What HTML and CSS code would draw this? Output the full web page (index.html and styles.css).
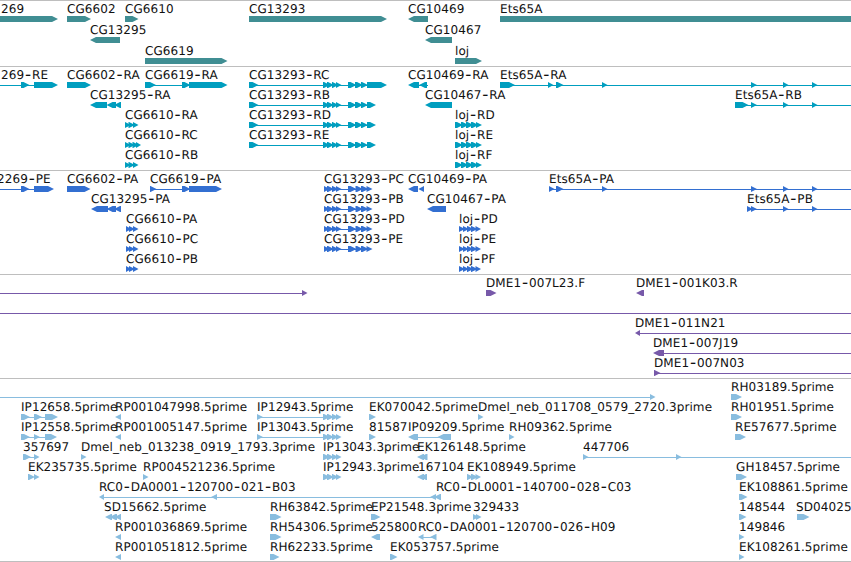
FILE: index.html
```html
<!DOCTYPE html>
<html lang="en">
<head>
    <meta charset="UTF-8">
    <title>Genome Browser</title>
    <link rel="stylesheet" href="styles.css">
</head>
<body>
    <main class="browser">
        <section class="track track-gene" id="gene"></section>
        <section class="track track-mrna" id="mrna"></section>
        <section class="track track-cds" id="cds"></section>
        <section class="track track-bac" id="bac"></section>
        <section class="track track-est" id="est"></section>
    </main>
    <script src="tracks.js"></script>
</body>
</html>
```
FILE: styles.css
```css
body {
    margin: 0;
    background-color: #fff;
    overflow: hidden;
}

.browser {
    display: flex;
    flex-direction: column;
    width: 851px;
    border-bottom: 1px solid #bebebe;
}

.track {
    box-sizing: border-box;
    border-top: 1px solid #bebebe;
    height: 104px;
    overflow: hidden;
}

.track svg {
    display: block;
    width: 100%;
    height: 100%;
}

.track text {
    font-family: "DejaVu Sans", sans-serif;
    font-size: 12px;
    letter-spacing: 0.08px;
    fill: #111;
    white-space: pre;
    text-rendering: geometricPrecision;
}

.track .hyphen {
    font-size: 17px;
}

.track-gene {
    height: 66px;
    color: #408e93;
}

.track-mrna {
    color: #009ebf;
}

.track-cds {
    color: #336fd1;
}

.track-bac {
    color: #7759a9;
}

.track-est {
    height: 183px;
    color: #89bddf;
}

.intron {
    fill: currentColor;
    shape-rendering: crispEdges;
}

.exon {
    fill: currentColor;
}
```
FILE: tracks.js
```js
const SVG_NS = 'http://www.w3.org/2000/svg';
const BAR = 6;
const TIP = 6;
const END = 870;
const HYPHEN_PAD = 0.8;
const HYPHEN_DROP = 1.2;

// exon groups used by more than one feature
const quad = [[323, 330], [327, 334], [332, 338.5], [336, 341.5]];
const rcExons = [[249, 258.5], ...quad, [348, 356.5], [355, 363], [361, 368]];
const rbExons = [...rcExons, [367, 376]];
const pcExons = [[324, 330], ...quad.slice(1), [348, 356.5], [355.5, 363], [361, 368.5], [366.5, 372.5]];
const etsExons = [[751, 757], [783, 788.5], [812, 817.5]];
const lojR = [[455, 463], [461, 468.5], [466, 473.5], [471, 478.5], [476, 482]];
const lojP = [[459, 465], [463, 469], [467, 473.5], [471, 477.5], [475.5, 481]];
const tripleR = [[125, 131], [128.5, 135], [133, 138.5]];
const tripleP = [[126, 131.5], [129, 135], [133, 138.5]];
const ip5 = [[257, 263], ...quad];

// row, label, label x, strand, exons, line
const tracks = {
    gene: { pitch: 21, features: [
        [0, '269', 1, 1, [[-10, 58]]],
        [0, 'CG6602', 67, 1, [[67, 91]]],
        [0, 'CG6610', 125, 1, [[125, 138.5]]],
        [0, 'CG13293', 249, 1, [[249, 387]]],
        [0, 'CG10469', 408, -1, [[408, 428]]],
        [0, 'Ets65A', 500, 1, [[500, END]]],
        [1, 'CG13295', 90, -1, [[90, 120]]],
        [1, 'CG10467', 425, -1, [[425, 452]]],
        [2, 'CG6619', 145, 1, [[145, 227.5]]],
        [2, 'loj', 455, 1, [[455, 482]]]
    ] },
    mrna: { pitch: 20, features: [
        [0, '269-RE', 1, 1, [[21, 29.5], [34, 58]], [0, 50]],
        [0, 'CG6602-RA', 67, 1, [[67, 91]]],
        [0, 'CG6619-RA', 145, 1, [[145, 156], [182, 190.5], [189, 227.5]], [145, 200]],
        [0, 'CG13293-RC', 249, 1, [...rcExons, [367, 387]], [249, 370]],
        [0, 'CG10469-RA', 408, -1, [[408, 419], [419, 427]], [410, 428]],
        [0, 'Ets65A-RA', 500, 1, [[500, 515], [548, 553.5], [556, 563.5], [602, 607.5], ...etsExons], [500, END]],
        [1, 'CG13295-RA', 90, -1, [[90, 107], [106.5, 116], [114, 121]]],
        [1, 'CG13293-RB', 249, 1, rbExons, [249, 370]],
        [1, 'CG10467-RA', 425, -1, [[425, 452]]],
        [1, 'Ets65A-RB', 735, 1, [[735, 748.5], ...etsExons], [735, END]],
        [2, 'CG6610-RA', 125, 1, tripleR],
        [2, 'CG13293-RD', 249, 1, rbExons, [249, 370]],
        [2, 'loj-RD', 455, 1, lojR],
        [3, 'CG6610-RC', 125, 1, [[125, 131], [128.5, 135], [132.5, 139], [136, 141]]],
        [3, 'CG13293-RE', 249, 1, rbExons, [249, 370]],
        [3, 'loj-RE', 455, 1, lojR],
        [4, 'CG6610-RB', 125, 1, tripleR],
        [4, 'loj-RF', 455, 1, lojR]
    ] },
    cds: { pitch: 20, features: [
        [0, '2269-PE', -3, 1, [[21, 29.5], [34, 54]], [0, 45]],
        [0, 'CG6602-PA', 67, 1, [[67, 90.5]]],
        [0, 'CG6619-PA', 150, 1, [[150, 156.5], [182, 190.5], [189, 222]], [150, 200]],
        [0, 'CG13293-PC', 324, 1, pcExons, [324, 370]],
        [0, 'CG10469-PA', 408, -1, [[408, 418], [418.3, 424]]],
        [0, 'Ets65A-PA', 549, 1, [[549, 554.5], [556, 563.5], [602, 607.5], ...etsExons], [549, END]],
        [1, 'CG13295-PA', 91, -1, [[91, 108], [106.5, 116], [114, 121]]],
        [1, 'CG13293-PB', 324, 1, pcExons, [324, 370]],
        [1, 'CG10467-PA', 427, -1, [[427, 446]]],
        [1, 'Ets65A-PB', 747, 1, [[747, 753], ...etsExons], [747, END]],
        [2, 'CG6610-PA', 126, 1, tripleP],
        [2, 'CG13293-PD', 324, 1, pcExons, [324, 370]],
        [2, 'loj-PD', 459, 1, lojP],
        [3, 'CG6610-PC', 126, 1, tripleP],
        [3, 'CG13293-PE', 324, 1, pcExons, [324, 370]],
        [3, 'loj-PE', 459, 1, lojP],
        [4, 'CG6610-PB', 126, 1, tripleP],
        [4, 'loj-PF', 459, 1, lojP]
    ] },
    bac: { pitch: 20, features: [
        [0, '', 0, 1, [[302, 307.5]], [0, 304]],
        [0, 'DME1-007L23.F', 486, 1, [[486, 496.5]]],
        [0, 'DME1-001K03.R', 636, -1, [[636, 644]]],
        [1, '', 0, 1, [], [0, END]],
        [2, 'DME1-011N21', 635, -1, [[635, 640]], [638, END]],
        [3, 'DME1-007J19', 653, -1, [[653, 664]], [660, END]],
        [4, 'DME1-007N03', 654, 1, [[654, 660.5]], [654, END]]
    ] },
    est: { pitch: 20, features: [
        [0, '', 0, 1, [[650, 655.5]], [0, 652]],
        [0, 'RH03189.5prime', 731, 1, [[731, 742]]],
        [1, 'IP12658.5prime', 21, 1, [[21, 30], [34, 42], [45, 58]], [21, 50]],
        [1, 'RP001047998.5prime', 115, -1, [[115, 121]]],
        [1, 'IP12943.5prime', 257, 1, ip5, [257, 338]],
        [1, 'EK070042.5prime', 369, 1, [[369, 376]]],
        [1, 'Dmel_neb_011708_0579_2720.3prime', 478, 1, [[478, 483.5]]],
        [1, 'RH01951.5prime', 731, 1, [[731, 742]]],
        [2, 'IP12558.5prime', 21, 1, [[21, 30], [34, 40], [45, 57]], [21, 50]],
        [2, 'RP001005147.5prime', 115, -1, [[115, 121]]],
        [2, 'IP13043.5prime', 257, 1, ip5, [257, 338]],
        [2, '81587', 369, 1, [[369, 376]]],
        [2, 'IP09209.5prime', 408, -1, [[408, 418], [437.5, 451]], [412, 448]],
        [2, 'RH09362.5prime', 509, 1, [[509, 514.5]]],
        [2, 'RE57677.5prime', 735, 1, [[735, 746]]],
        [3, '357697', 23, 1, [[23, 31], [34, 39.5]], [23, 36]],
        [3, 'Dmel_neb_013238_0919_1793.3prime', 81, 1, [[81, 86.5]]],
        [3, 'IP13043.3prime', 323, 1, quad],
        [3, 'EK126148.5prime', 417, -1, [[417, 424], [420, 427.5]]],
        [3, '447706', 583, 1, [[583, 588.5], [676, 681.5]], [583, END]],
        [4, 'EK235735.5prime', 28, 1, [[28, 35], [34, 39.5]]],
        [4, 'RP004521236.5prime', 143, 1, [[143, 148.5]]],
        [4, 'IP12943.3prime', 323, 1, quad],
        [4, '167104', 418, -1, [[417, 424], [420, 427]]],
        [4, 'EK108949.5prime', 467, 1, [[467, 473.5], [471, 478], [475.5, 481]]],
        [4, 'GH18457.5prime', 736, 1, [[736, 747]]],
        [5, 'RC0-DA0001-120700-021-B03', 99, -1, [[99, 104], [211, 217], [430, 436]], [102, 436]],
        [5, 'RC0-DL0001-140700-028-C03', 436, -1, [[434, 441]]],
        [5, 'EK108861.5prime', 739, 1, [[739, 747.5]]],
        [6, 'SD15662.5prime', 104, -1, [[105, 112], [109.5, 117], [114.5, 121]]],
        [6, 'RH63842.5prime', 270, 1, [[270, 281.5]]],
        [6, 'EP21548.3prime', 371, 1, [[371, 380.5]]],
        [6, '329433', 473, 1, [[473, 479], [476, 481.5]]],
        [6, '148544', 739, 1, [[739, 746.5]]],
        [6, 'SD04025', 796, 1, [[797, 809.5]]],
        [7, 'RP001036869.5prime', 115, -1, [[115, 121]]],
        [7, 'RH54306.5prime', 270, 1, [[270, 281.5]]],
        [7, '525800', 371, -1, [[371, 380]]],
        [7, 'RC0-DA0001-120700-026-H09', 418, -1, [[418, 423.5], [430, 436.5]], [421, 434]],
        [7, '149846', 739, 1, [[739, 744.5]]],
        [8, 'RP001051812.5prime', 115, -1, [[115, 121]]],
        [8, 'RH62233.5prime', 270, 1, [[270, 279.5]]],
        [8, 'EK053757.5prime', 390, 1, [[390, 397.5]]],
        [8, 'EK108261.5prime', 739, 1, [[739, 744.5]]]
    ] }
};

function add(parent, name, attrs) {
    const el = document.createElementNS(SVG_NS, name);
    for (const key in attrs) {
        el.setAttribute(key, attrs[key]);
    }
    parent.appendChild(el);
    return el;
}

// a bar that narrows to a point on the strand's side
function exonPoints(x1, x2, y, strand) {
    const tip = Math.min(TIP, x2 - x1);
    const mid = y + BAR / 2;
    const bottom = y + BAR;
    if (strand > 0) {
        return `${x1},${y} ${x2 - tip},${y} ${x2},${mid} ${x2 - tip},${bottom} ${x1},${bottom}`;
    }
    return `${x2},${y} ${x1 + tip},${y} ${x1},${mid} ${x1 + tip},${bottom} ${x2},${bottom}`;
}

// hyphens are set wider than the font has them
function addLabel(svg, label, x, y) {
    const text = add(svg, 'text', { x: x, y: y });
    label.split('-').forEach((part, i) => {
        if (i > 0) {
            add(text, 'tspan', { class: 'hyphen', dx: HYPHEN_PAD, dy: HYPHEN_DROP }).textContent = '-';
            add(text, 'tspan', { dx: HYPHEN_PAD, dy: -HYPHEN_DROP }).textContent = part;
        } else {
            text.textContent = part;
        }
    });
}

for (const id in tracks) {
    const svg = add(document.getElementById(id), 'svg', {});
    tracks[id].features.forEach(([row, label, x, strand, exons, line]) => {
        const top = row * tracks[id].pitch;
        if (line) {
            add(svg, 'rect', { class: 'intron', x: line[0], y: top + 18, width: line[1] - line[0], height: 1 });
        }
        exons.forEach(([x1, x2]) => {
            add(svg, 'polygon', { class: 'exon', points: exonPoints(x1, x2, top + 15, strand) });
        });
        if (label) {
            addLabel(svg, label, x, top + 12);
        }
    });
}
```
